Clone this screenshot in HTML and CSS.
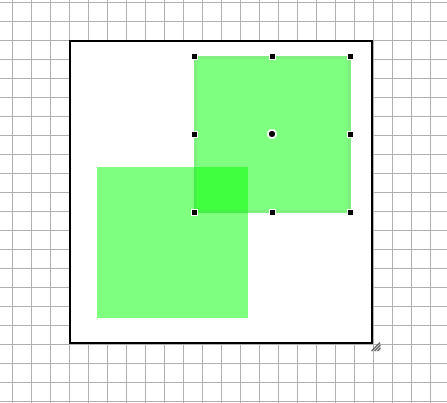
FILE: index.html
```
<!DOCTYPE html>
<html lang="en">
<head>
<meta charset="utf-8">
<title>Canvas editor</title>
<link rel="stylesheet" href="styles.css">
</head>
<body>
<main class="workspace">
  <div class="artboard">
    <svg class="drawing" viewBox="0 0 300 300" role="img" aria-label="Two overlapping green squares, one selected">
      <rect class="shape" x="26" y="125" width="151" height="151"/>
      <rect class="shape" x="123" y="14" width="157" height="157"/>
      <rect class="outline" x="124.5" y="15.5" width="154" height="154"/>
      <g class="handles">
        <rect x="120.5" y="11.5" width="6" height="6"/>
        <rect x="198.5" y="11.5" width="6" height="6"/>
        <rect x="276.5" y="11.5" width="6" height="6"/>
        <rect x="120.5" y="89.5" width="6" height="6"/>
        <rect x="276.5" y="89.5" width="6" height="6"/>
        <rect x="120.5" y="167.5" width="6" height="6"/>
        <rect x="198.5" y="167.5" width="6" height="6"/>
        <rect x="276.5" y="167.5" width="6" height="6"/>
      </g>
      <circle class="pivot" cx="201" cy="92" r="4"/>
    </svg>
    <svg class="grip" viewBox="0 0 10 10" aria-hidden="true">
      <path class="grip-light" d="M2 9.500 10 1.500M5 9.500 10 4.500M8 9.500 10 7.500"/>
      <path class="grip-dark" d="M.5 9 9 .5M3.500 9 9.500 3M6.500 9 9.500 6"/>
    </svg>
  </div>
</main>
</body>
</html>
```
FILE: styles.css
```
body {
  margin: 0;
  background: #fff;
}

.workspace {
  box-sizing: border-box;
  min-height: 100vh;
  padding: 40px 69px 0;
  overflow: hidden;
  background-image:
    linear-gradient(to right, #b0b0b0 1px, transparent 1px),
    linear-gradient(to bottom, #b0b0b0 1px, transparent 1px);
  background-size: 19px 19px;
  background-position: 12px 2px;
}

.artboard {
  position: relative;
  width: max-content;
  border: 2px solid #000;
  background: #fff;
}

.drawing {
  display: block;
  width: 300px;
  height: 300px;
}

.shape {
  fill: #0f0;
  fill-opacity: 0.5;
}

.outline {
  fill: none;
  stroke: #808080;
  stroke-opacity: 0.12;
  stroke-width: 3;
}

.handles {
  fill: #000;
  stroke: #fff;
  stroke-width: 1;
}

.pivot {
  fill: #000;
  stroke: #fff;
  stroke-width: 2;
}

.grip {
  position: absolute;
  right: -10px;
  bottom: -10px;
  width: 10px;
  height: 10px;
  cursor: nwse-resize;
}

.grip-light,
.grip-dark {
  fill: none;
}

.grip-light {
  stroke: #c8c8c8;
  stroke-width: 1;
}

.grip-dark {
  stroke: #606060;
  stroke-width: 1.3;
}
```
